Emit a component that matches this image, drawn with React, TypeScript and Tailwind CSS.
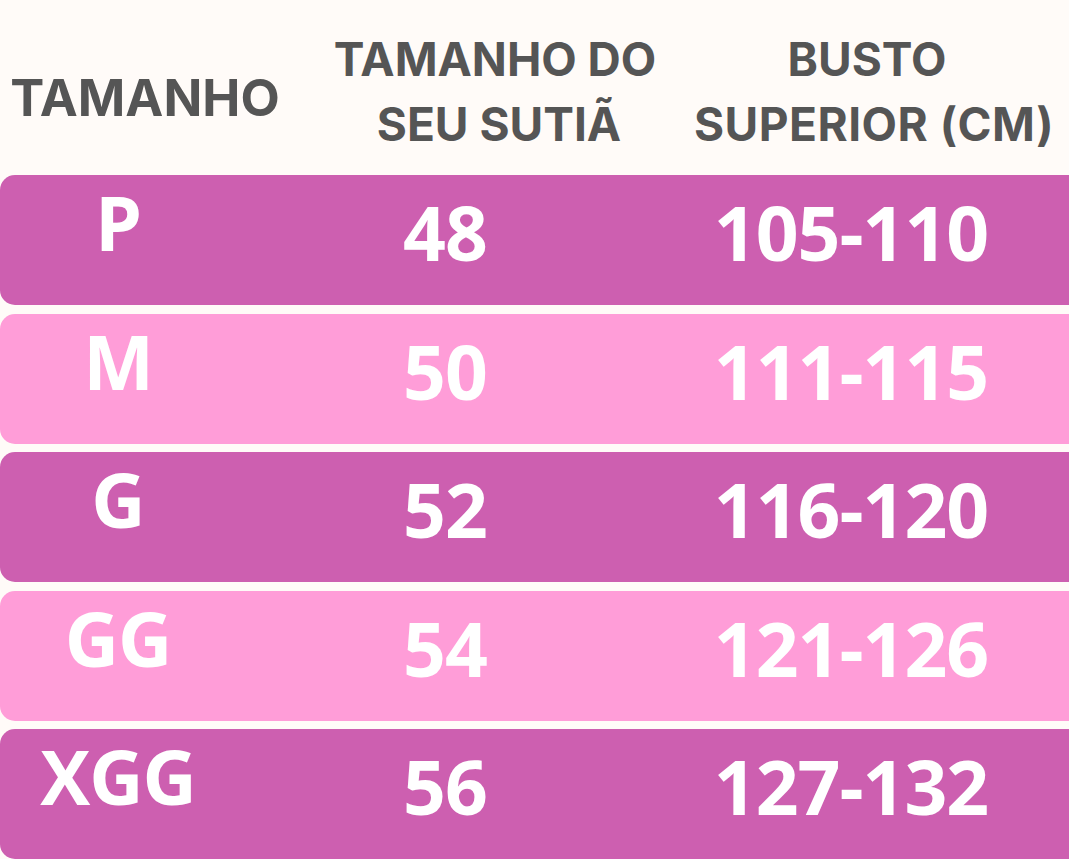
import React from "react";

const rows = [
  { size: "P", band: "48", bust: "105-110", dark: true },
  { size: "M", band: "50", bust: "111-115", dark: false },
  { size: "G", band: "52", bust: "116-120", dark: true },
  { size: "GG", band: "54", bust: "121-126", dark: false },
  { size: "XGG", band: "56", bust: "127-132", dark: true },
];

export default function App() {
  return (
    <div className="w-[1069px] h-[859px] overflow-hidden bg-[#fffbf8]">
      <div className="flex h-[175px] font-['Inter',sans-serif] font-bold text-[#555555] whitespace-nowrap">
        <div className="w-[290px] flex flex-col items-center pt-[68px]">
          <span className="text-[51px] leading-[60px]">TAMANHO</span>
        </div>
        <div className="w-[410px] flex flex-col items-center pt-[27px] text-[46px] leading-[64.5px]">
          <span>TAMANHO DO</span>
          <span className="pl-[8px]">SEU SUTIÃ</span>
        </div>
        <div className="w-[348px] flex flex-col items-center pt-[27px] text-[46px] leading-[64.5px]">
          <span className="-ml-[14px]">BUSTO</span>
          <span className="tracking-[0.5px]">SUPERIOR (CM)</span>
        </div>
      </div>
      <div className="flex flex-col gap-[8.5px] font-['Open_Sans',sans-serif] font-bold text-white text-[75px] leading-[75px] tracking-[-1px] whitespace-nowrap">
        {rows.map((r) => (
          <div
            key={r.size}
            className={
              "grid grid-cols-[236px_418px_394px] h-[130px] rounded-l-[15px] " +
              (r.dark ? "bg-[#cd5fb0]" : "bg-[#ff9dd8]")
            }
          >
            <div className="flex justify-center pt-[10px]">{r.size}</div>
            <div className="flex justify-center pt-[20px]">{r.band}</div>
            <div className="flex justify-center pt-[20px]">{r.bust}</div>
          </div>
        ))}
      </div>
    </div>
  );
}
